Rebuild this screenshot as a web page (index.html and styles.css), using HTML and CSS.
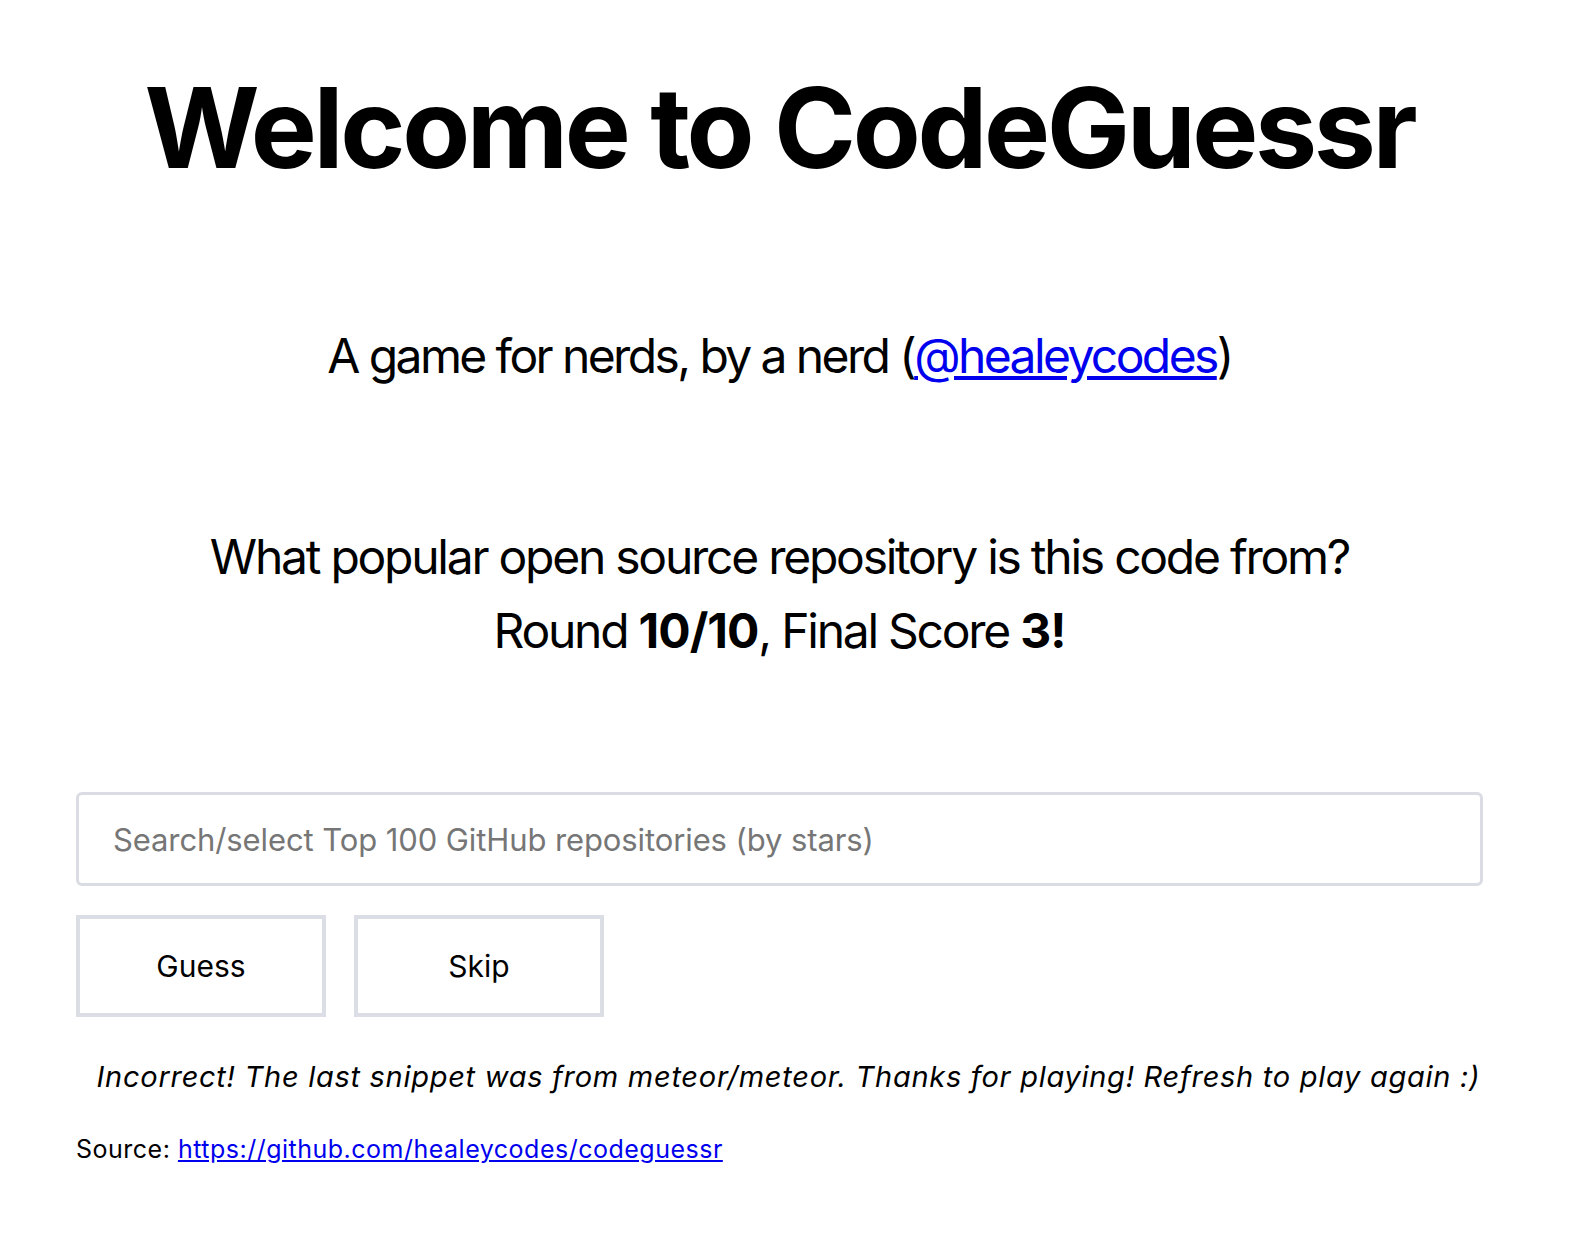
FILE: index.html
```html
<!DOCTYPE html>
<html lang="en">
<head>
<meta charset="utf-8">
<title>CodeGuessr</title>
<link rel="stylesheet" href="styles.css">
</head>
<body>
<main class="page">
  <h1 class="title">Welcome to CodeGuessr</h1>
  <p class="subtitle">A game for nerds, by a nerd (<a href="#">@healeycodes</a>)</p>
  <p class="question">What popular open source repository is this code from?<br>Round <b>10/10</b>, Final Score <b>3!</b></p>
  <input class="search" type="text" placeholder="Search/select Top 100 GitHub repositories (by stars)">
  <div class="actions">
    <button class="btn">Guess</button>
    <button class="btn">Skip</button>
  </div>
  <p class="result">Incorrect! The last snippet was from meteor/meteor. Thanks for playing! Refresh to play again :)</p>
  <p class="source">Source: <a href="#">https://github.com/healeycodes/codeguessr</a></p>
</main>
</body>
</html>
```
FILE: styles.css
```css
html, body {
  margin: 0;
  padding: 0;
  background: #ffffff;
}

body {
  font-family: Inter, "Liberation Sans", sans-serif;
  color: #000000;
}

.page {
  width: 1407px;
  margin-left: 76px;
  padding-top: 61px;
}

.title {
  margin: 0;
  font-size: 111px;
  line-height: 134px;
  font-weight: 700;
  text-align: center;
  letter-spacing: -3.4px;
}

.subtitle {
  margin: 132px 0 0;
  font-size: 48px;
  line-height: 58px;
  text-align: center;
  letter-spacing: -2.6px;
}

.subtitle a,
.source a {
  color: #0000ee;
}

.question {
  margin: 135px 0 0;
  font-size: 48px;
  line-height: 73.5px;
  text-align: center;
  letter-spacing: -2.25px;
}

.question b {
  font-weight: 700;
  letter-spacing: -1px;
}

.search {
  display: block;
  box-sizing: border-box;
  width: 100%;
  height: 94px;
  margin: 125px 0 0;
  padding: 0 34px;
  border: 3px solid #dadce4;
  border-radius: 6px;
  font-family: Inter, "Liberation Sans", sans-serif;
  font-size: 31px;
  letter-spacing: -0.1px;
  color: #000;
  outline: none;
}

.search::placeholder {
  color: #767676;
}

.actions {
  display: flex;
  gap: 28px;
  margin-top: 29px;
}

.btn {
  box-sizing: border-box;
  width: 250px;
  height: 102px;
  border: 4px solid #dcdee6;
  border-radius: 0;
  background: #ffffff;
  font-family: Inter, "Liberation Sans", sans-serif;
  font-size: 30px;
  color: #000;
  padding: 0;
}

.result {
  margin: 43px 0 0;
  padding-left: 18px;
  font-size: 29px;
  line-height: 34px;
  font-style: italic;
  letter-spacing: 0.72px;
  text-align: center;
  white-space: nowrap;
}

.source {
  margin: 40px 0 0;
  font-size: 25px;
  line-height: 30px;
  letter-spacing: 0.5px;
}
```
